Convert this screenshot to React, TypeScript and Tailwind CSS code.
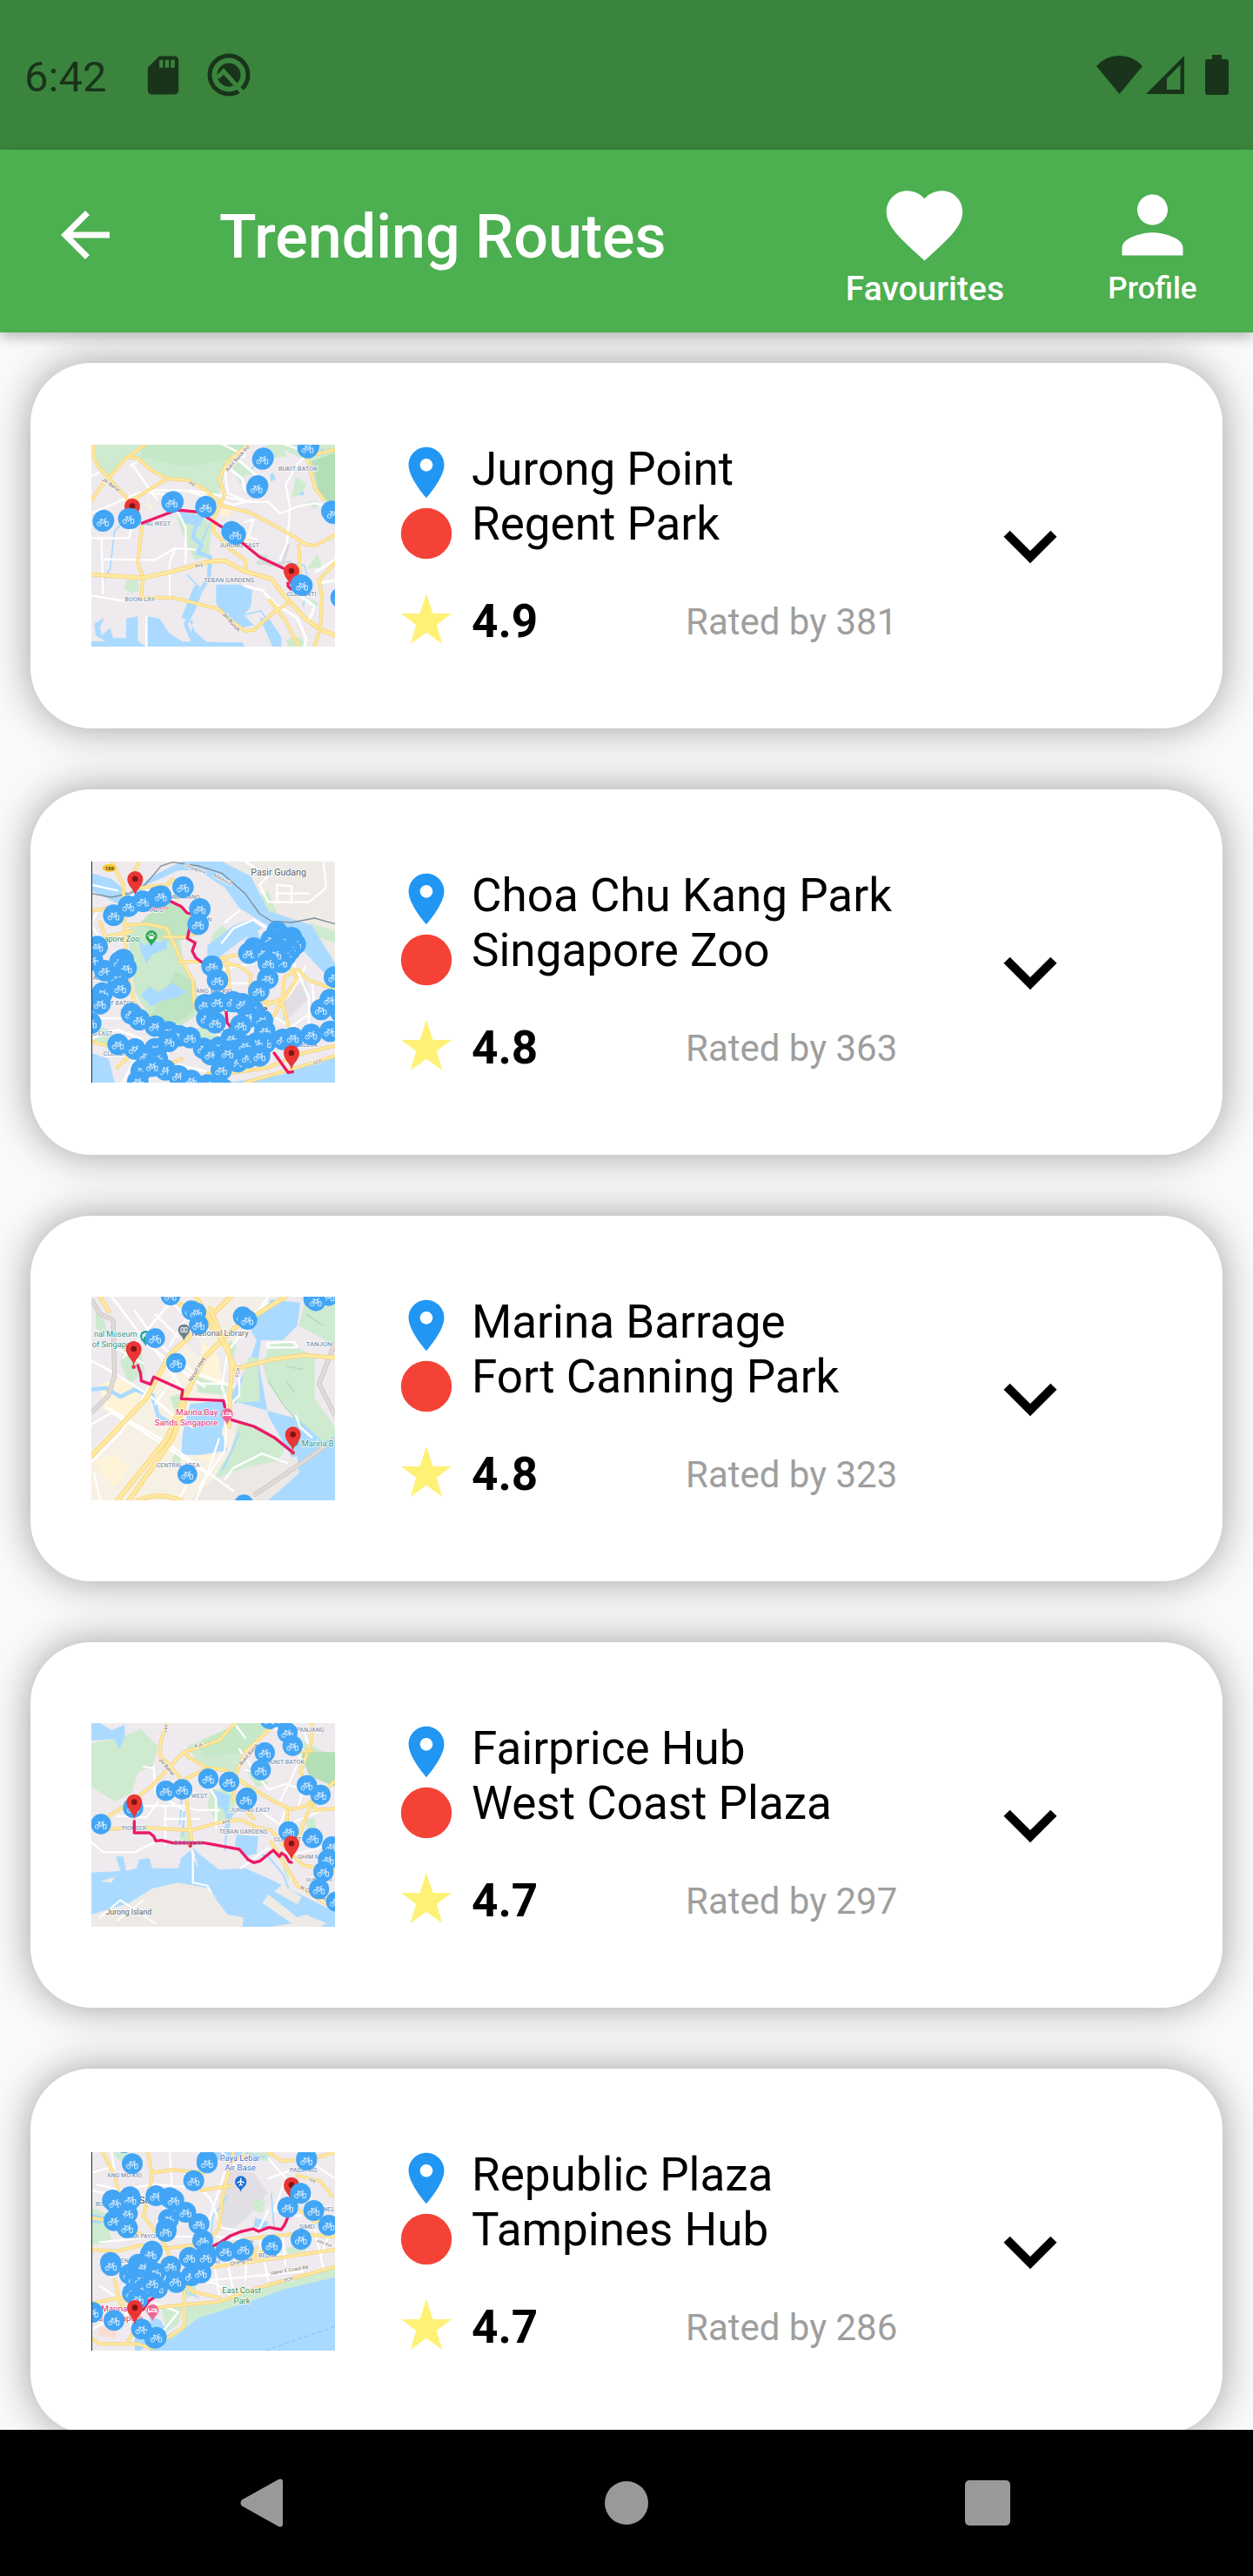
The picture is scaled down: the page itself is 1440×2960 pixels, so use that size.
import React from "react";

type Point = [number, number];

const LAND = "#eeeaee";
const WATER = "#aadaff";
const GREEN = "#ceebd0";

function Area({ d, fill = GREEN }: { d: string; fill?: string }) {
  return <path d={d} fill={fill} />;
}

function Street({ d, w = 7 }: { d: string; w?: number }) {
  return <path d={d} fill="none" stroke="#ffffff" strokeWidth={w} strokeLinejoin="round" strokeLinecap="round" />;
}

function Highway({ d, w = 12 }: { d: string; w?: number }) {
  return (
    <g fill="none" strokeLinejoin="round" strokeLinecap="round">
      <path d={d} stroke="#f7d47c" strokeWidth={w} />
      <path d={d} stroke="#ffe9a0" strokeWidth={w - 5} />
    </g>
  );
}

function Trail({ d }: { d: string }) {
  return <path d={d} fill="none" stroke="#ec1a66" strokeWidth={10} strokeLinejoin="round" strokeLinecap="round" />;
}

function Bikes({ at, r = 36 }: { at: Point[]; r?: number }) {
  return (
    <>
      {at.map(([x, y], i) => (
        <g key={i} transform={`translate(${x} ${y})`}>
          <circle r={r} fill="#42a5f5" />
          <g fill="none" stroke="#d9edfd" strokeWidth={3}>
            <circle cx={-13} cy={9} r={7} />
            <path d="M7 1h11v15H8zM-13 9l7-14h13l3 14M-6-5L0 9M0 9L7-5M-11-7h8M5-9h7" />
          </g>
        </g>
      ))}
    </>
  );
}

function Marker({ x, y }: { x: number; y: number }) {
  return (
    <g transform={`translate(${x} ${y})`}>
      <path d="M0 0C-3-22-27-34-27-58A27 27 0 1 1 27-58C27-34 3-22 0 0Z" fill="#e93534" />
      <circle cy={-58} r={10} fill="#80150f" />
    </g>
  );
}

function Label({
  x,
  y,
  size = 21,
  fill = "#8494b0",
  weight = 500,
  rotate = 0,
  anchor = "start",
  children,
}: {
  x: number;
  y: number;
  size?: number;
  fill?: string;
  weight?: number;
  rotate?: number;
  anchor?: "start" | "middle" | "end";
  children: string;
}) {
  return (
    <text
      x={x}
      y={y}
      fontSize={size}
      fill={fill}
      fontWeight={weight}
      textAnchor={anchor}
      transform={rotate ? `rotate(${rotate} ${x} ${y})` : undefined}
      stroke="#ffffff"
      strokeWidth={4}
      paintOrder="stroke"
      strokeLinejoin="round"
    >
      {children}
    </text>
  );
}

function JurongMap() {
  return (
    <svg viewBox="30 33 840 696" className="block w-full" role="img" aria-label="Map of Jurong Point to Regent Park">
      <rect x="30" y="33" width="840" height="696" fill={LAND} />
      <Area d="M45 33H560L490 130 465 215 410 180 340 150 280 145 195 80 150 75 90 150 40 90Z" />
      <Area d="M205 33H560L520 80 350 110 200 75Z" fill="#c5e8c8" />
      <Area d="M650 33H870V250L820 215 780 90Z" />
      <Area d="M790 90L870 60V250L815 200Z" fill="#b3dfb6" />
      <Area d="M500 90L545 80 570 110 600 130 560 140 545 170Z" />
      <Area d="M625 33h60l20 40-45 5zM735 145l35 20-10 40-40 10zM770 235l40-10-5 30zM810 410l15 45-50 5zM610 410l30 5-10 30-25 5zM150 500l40-5 5 40-25 10-28-15z" />
      <Area d="M325 285l60-25 60 50-10 110-50 10-30-60z" />
      <Area d="M700 705l50-10 20 34h-60zM780 560l35 20-20 30z" />
      <Area d="M215 640l60 20 45 50-100 15zM735 655l40 15-15 25z" fill="#efe8dc" />
      <Area d="M478 250l35 8-10 24-30-5zM220 215l25 45-18-5zM540 340l35 5-5 30-25-5z" fill="#fff3d2" />
      <Area d="M325 262L420 280 405 315 340 300ZM460 515L540 515 585 535 580 590 555 620 590 655 540 665 490 625 460 580Z" fill={WATER} />
      <path d="M395 300l-15 50 30 30-15 25 45 15-5 70-30 50-25 65-25 45 20 50" fill="none" stroke={WATER} strokeWidth="14" strokeLinejoin="round" />
      <path d="M640 45l-45 55-15 20M170 270l-60 60-15 130-30 45M555 620l60-15 30 50 25 74M360 480l40 45M710 440l55 10 15 60-20 80M440 300l-30 70" fill="none" stroke={WATER} strokeWidth="5" />
      <Area d="M30 710L80 712 45 690 40 650 75 630 60 660 65 690 95 665 105 700 150 700V632L190 625V710L220 729H30ZM220 625L265 632 300 685 345 712 550 715 560 729H220ZM380 640l-40-10 45-110 20 0-40 115 25 45 40 35h-60zM610 630l35 5 40 60v34h-30z" fill={WATER} />
      <Area d="M645 138l12-8 8 22-15 8zM750 195l12 0 0 12-12 0zM820 45l15 5-10 25z" fill={WATER} />
      <path d="M600 440l90 5 20-70M640 450l80-15" fill="none" stroke="#d5d9dc" strokeWidth="8" />
      <Street d="M165 105L185 95M170 100L255 220M30 355H160L185 240M65 355L70 545M75 428L250 430 318 390 390 395M230 200L300 205 355 320 355 440M30 270L190 200 250 190 350 190 520 240 580 225" />
      <Street d="M30 140L55 130M318 390L300 440 300 565M30 553L130 570 160 568M220 625V729M370 190L480 210 570 230 640 230 680 270 745 245 800 235 850 245M560 300L590 290 570 350 600 360M485 33L560 70 490 120 500 200 570 230M700 33L780 60 740 100 700 170 715 250 705 370 680 430" />
      <Street d="M560 520L620 535 660 580 740 630 770 700 765 729M730 540L800 590 780 640M820 510L870 500M805 470L870 430M500 110L550 150 560 190M520 70L600 140" w={9} />
      <Highway d="M38 33Q30 80 60 115L150 215 170 240M30 228L60 180 150 80 215 33M165 78H188L235 120 290 150 360 155 425 190 485 245 570 265 640 300 730 350 765 375 800 382 870 345" />
      <Highway d="M290 150L170 225M170 270L205 310 190 440 208 490 202 560M570 35L500 90 470 150 490 205 450 290 450 330 510 395 560 430 565 470" />
      <Highway d="M30 480L205 492 290 475 440 435 490 433 560 470 650 495 700 560 770 635 820 670 870 690" w={15} />
      <Highway d="M205 560H310L470 600 500 630 560 675 590 672 660 610 715 575M645 570L700 640 745 729M870 440L815 500 825 560 820 660 800 729M775 80L800 180 830 220M745 380L750 470 730 500M870 50L810 65" />
      <Label x={160} y={311}>JURONG WEST</Label>
      <Label x={470} y={387}>JURONG EAST</Label>
      <Label x={417} y={508} size={22}>TEBAN GARDENS</Label>
      <Label x={145} y={574} size={22}>BOON LAY</Label>
      <Label x={674} y={124} size={22}>BUKIT BATOK</Label>
      <Label x={704} y={555}>CLEMENTI</Label>
      <Label x={65} y={155} size={17} fill="#8d7e74" rotate={35}>Jln Bahar</Label>
      <Label x={500} y={126} size={17} fill="#8d7e74" rotate={-48}>Bukit Batok Rd</Label>
      <Label x={480} y={618} size={19} fill="#8d7e74" rotate={48}>Jln Buroh</Label>
      <Label x={365} y={168} size={15} fill="#8d7e74" rotate={30}>PIE</Label>
      <Label x={388} y={457} size={16} fill="#8d7e74" rotate={-8}>AYE</Label>
      <Trail d="M205 303L325 258 400 265 500 330 610 420 700 463M708 510V520L718 531" />
      <Marker x={171} y={303} />
      <Marker x={720} y={526} />
      <Bikes at={[[73, 293], [70, 297], [166, 287], [158, 288], [312, 229], [307, 232], [425, 245], [424, 248], [514, 332], [527, 342], [623, 79], [620, 83], [604, 174], [600, 182], [780, 38], [776, 44], [858, 262], [864, 270], [752, 516], [757, 518], [890, 560]]} />
    </svg>
  );
}

function ZooMap() {
  return (
    <svg viewBox="30 30 840 762" className="block w-full" role="img" aria-label="Map of Choa Chu Kang Park to Singapore Zoo">
      <rect x="30" y="30" width="840" height="762" fill={LAND} />
      <Area d="M480 30H870V400L790 290 640 210 560 120Z" fill="#eeebe6" />
      <Area d="M160 240L330 260 350 400 400 470 390 560 320 610 230 560 180 480 160 350Z" fill="#cbe9cc" />
      <Area d="M200 240l80-80 110 60-40 80-70 10zM320 410l70 30-10 110-60 40-90-20z" fill="#bfe4c1" />
      <Area d="M780 240l90 30v40l-60-20zM450 280l30-30 45 30-40 40-50 10zM380 610l70-20 20 50-50 10zM30 590l60 20 10 60-60-10zM580 180l60-50 30 80-60 10z" />
      <Area d="M30 70L100 90 160 140 240 80 340 30H480L580 80 640 200 790 250 870 380V450L800 380 720 290 620 240 540 190 490 120 400 60 330 60 220 110 150 190 30 130Z" fill={WATER} />
      <Area d="M430 320l90-70 60-20 40 30-70 40-80 60-40 10zM560 300l40-40 20 60z" fill={WATER} />
      <Area d="M190 290l20 30 30-20 30 10 20-20 0 40-50 20-20 30-15-30zM200 490l30-30 30 20 50-30 50 30-40 20-50 10-30 20z" fill={WATER} />
      <Area d="M870 705L740 735 690 765 500 792H870ZM30 690l60 20 20 82H30z" fill={WATER} />
      <Area d="M700 480l70-40 10 60-60 60-30 20z" fill="#e1dfe3" />
      <path d="M30 140L100 153 160 140 215 110 270 45 310 32 400 45 480 70 560 140 610 210 650 235 720 240 800 225 870 245" fill="none" stroke="#848c95" strokeWidth="4" />
      <Street d="M560 30L640 80 610 110 640 170H780L840 120 830 30M670 170V110L720 115V170M670 140H780M30 110L120 130M50 200L30 250 70 310M160 150L250 120M480 310L520 260 590 230 650 270M440 410L590 380M500 450H580M770 390L720 480 650 560 720 600 800 540 790 440M540 200L490 240" />
      <Street d="M30 640L120 610 200 640M60 570H180M100 410L180 390M260 760L300 680M640 620L770 640M720 360L780 500 780 650M200 660L140 792M330 730L450 760" w={8} />
      <Highway d="M100 30L140 110 145 250 155 420 180 520 215 555 330 610 430 680 520 690 700 640M195 30L170 80 200 120 290 110 310 90 330 160M30 200L90 190 150 250 220 245 290 260 340 370 380 440 385 530 450 600M280 290H360L410 270" />
      <Highway d="M335 375H430L560 345M430 370L540 390 580 420 575 490 520 510M560 560L690 500 695 430 740 400 780 440 870 470M600 510L690 520 710 600M495 360L510 500M700 380L740 430 640 590 600 620" />
      <Highway d="M60 240L80 290 170 270M30 650L140 680 160 700 120 740M160 560L250 620 360 630M430 760H510L640 740 760 690 870 665M560 792L740 740 870 700M230 760L340 710" />
      <ellipse cx={92} cy={52} rx={24} ry={13} fill="#f8c927" />
      <text x={92} y={59} fontSize={18} textAnchor="middle" fill="#4b4433" fontWeight={700}>188</text>
      <Label x={580} y={78} size={32} fill="#5b6470" weight={400}>Pasir Gudang</Label>
      <Label x={350} y={47} size={17} fill="#8b97a5" rotate={20}>Singapore</Label>
      <Label x={450} y={81} size={17} fill="#8b97a5" rotate={27}>Malaysia</Label>
      <Label x={74} y={307} size={27} fill="#2d8a50" weight={400}>apore Zoo</Label>
      <Label x={299} y={159}>MBAWANG</Label>
      <Label x={222} y={205}>ANDS</Label>
      <Label x={430} y={236}>N</Label>
      <Label x={390} y={484} size={22}>ANG MO KIO</Label>
      <Label x={95} y={524}>T BATOK</Label>
      <Label x={35} y={630} size={20}>G EAST</Label>
      <Label x={71} y={698}>CLEMENTI</Label>
      <Label x={436} y={625}>TOA PAYOH</Label>
      <Label x={747} y={669} size={20}>BEDOK</Label>
      <Label x={35} y={437} size={20}>AN</Label>
      <Label x={797} y={730} size={16} fill="#8d7e74" rotate={-15}>ECP</Label>
      <Label x={485} y={549} size={34} fill="#3d4247" weight={400}>Singapore</Label>
      <path d="M237 323C234 307 217 302 217 287a20 20 0 1 1 40 0C257 302 240 307 237 323Z" fill="#31a853" />
      <g fill="#fff">
        <ellipse cx={237} cy={292} rx={8} ry={6} />
        <circle cx={227} cy={286} r={3} />
        <circle cx={233} cy={279} r={3} />
        <circle cx={241} cy={279} r={3} />
        <circle cx={247} cy={286} r={3} />
      </g>
      <path d="M205 190H295" stroke="#f4a6bd" strokeWidth={7} />
      <Trail d="M305 168L340 185 360 207 372 210M368 262L361 295 388 310 378 338 390 362 412 378M495 550L498 585 510 600M550 635L565 640M660 690L708 757 724 755" />
      <Marker x={181} y={148} />
      <Bikes
        r={37}
        at={[
          [107, 215], [158, 184], [208, 167], [258, 152], [270, 149], [346, 118], [404, 193], [398, 246], [446, 390], [465, 439],
          [50, 323], [34, 370], [140, 368], [128, 376], [76, 406], [150, 397], [120, 435], [130, 466], [68, 483], [60, 520], [28, 587],
          [590, 328], [573, 346], [670, 272], [650, 300], [690, 290], [720, 292], [705, 305], [733, 315], [715, 335], [665, 330], [700, 355], [625, 345], [685, 377], [665, 350], [640, 380], [638, 433], [607, 476],
          [168, 554], [195, 575], [250, 597], [296, 617], [334, 631], [296, 650], [370, 637], [122, 660], [180, 676], [417, 674], [250, 675], [218, 700], [257, 708], [202, 750], [285, 748], [330, 768], [375, 785], [190, 788], [430, 800], [240, 735],
          [422, 523], [465, 514], [428, 570], [457, 585], [518, 513], [550, 520], [588, 543], [572, 566], [545, 594], [620, 577], [628, 613], [512, 640], [630, 655], [470, 670], [520, 682], [600, 655], [560, 665], [442, 695], [535, 720], [570, 706], [610, 700], [485, 720], [478, 748], [500, 690],
          [690, 643], [725, 637], [788, 626], [853, 615], [822, 540], [853, 506], [868, 428], [890, 550], [485, 815],
        ]}
      />
      <Marker x={720} y={748} />
      <path d="M31 30V792" stroke="#262b30" strokeWidth={4} />
    </svg>
  );
}

function MarinaMap() {
  return (
    <svg viewBox="30 30 840 702" className="block w-full" role="img" aria-label="Map of Marina Barrage to Fort Canning Park">
      <rect x="30" y="30" width="840" height="702" fill={LAND} />
      <Area d="M350 190L480 300 470 390 540 540 430 732H30V560L200 380Z" fill="#f7f0e4" />
      <Area d="M320 30H520L640 30 560 170 450 230 370 150Z" fill="#f3eee8" />
      <Area d="M410 180l60 60 10 90-80-10zM60 330l80-20 60 60-50 80-80-30zM40 600l70-30 50 50-50 70zM470 430l25 60-60 110-40-20z" fill="#fff3d8" />
      <Area d="M650 40L750 50 740 130 690 180 615 180 605 250 640 440 730 600 750 640 730 700 870 732V480L700 440 540 395 500 400 480 500 500 560 410 575 340 575 345 500 370 400 500 385 570 270 600 180 570 130Z" fill={WATER} />
      <Area d="M740 640L870 490V732H620Z" fill={WATER} />
      <Area d="M645 200L700 180 800 240 800 380 870 480V510L830 530 730 440 640 330 620 260Z" />
      <Area d="M745 130L770 30H870V200L820 170Z" />
      <Area d="M540 460L620 480 700 550 670 600 560 620 480 680 450 660 510 560Z" />
      <Area d="M560 620L740 580 745 640 640 732H370L450 660Z" fill="#ece8e5" />
      <Area d="M140 200L200 210 215 290 160 330 130 260ZM380 300L500 340 495 370 400 360ZM300 375l50-15 10 40-40 30zM570 240l35 0 5 150-80 5zM320 560l20 10-5 50-30-15zM45 80l30 30 10 50-40-20zM510 180l20 20-10 40-30-30z" />
      <path d="M640 320l50 80 70 80M770 90l60 40M700 320l30 40M700 270l60 10" fill="none" stroke="#b3ddba" strokeWidth="5" />
      <path d="M30 350L80 345 130 375 180 350 240 370 260 440 310 470" fill="none" stroke={WATER} strokeWidth="14" strokeLinejoin="round" />
      <path d="M540 500l-35 80-25 50" fill="none" stroke={WATER} strokeWidth="7" />
      <Street d="M30 250L120 300 230 370 300 430 380 480M80 410L270 520 520 700M30 470L100 430 200 490 430 640M180 80L260 190 380 290 520 340M30 600L130 500 250 310M210 260L120 210M100 30L230 200 310 260 420 340M320 30L140 240" w={8} />
      <Street d="M640 30L500 220 480 340 500 400 490 560 400 690M470 520L430 640 390 732M540 170L600 80 640 50M500 330H400L350 290M300 40L420 170M400 30L300 200M240 200L360 370M620 570L520 620 490 660M620 572L705 603M735 440L750 480 790 515M635 190L730 185 740 205 640 205ZM40 640L60 732M540 310V370L510 400M250 90L330 170M300 250L200 400M250 400L320 300M400 600L330 732" />
      <path d="M30 40L60 90 105 110 110 300 90 370 30 430M870 520L760 600 590 715M870 190L815 330 870 440" fill="none" stroke="#cfc9c6" strokeWidth="16" strokeLinejoin="round" />
      <path d="M30 40L60 90 105 110 110 300 90 370 30 430M870 520L760 600 590 715M870 190L815 330 870 440" fill="none" stroke="#e0dbd8" strokeWidth="10" strokeLinejoin="round" />
      <Highway d="M30 580L220 380 300 230 420 120 510 30" w={17} />
      <Highway d="M120 732L290 520 340 400 420 240 520 140 700 30M160 732L310 520 350 400" w={17} />
      <Highway d="M300 30L430 120 500 200 515 270 510 330 505 480M390 30L460 140 530 280M520 295L540 275 660 245 760 232 870 240M440 70L480 170M190 732Q260 700 340 732M60 30L90 80" w={15} />
      <Label x={187} y={169} size={27} fill="#22948b" weight={400} anchor="end">nal Museum</Label>
      <Label x={32} y={205} size={28} fill="#22948b" weight={400}>of Singapore</Label>
      <Label x={376} y={166} size={28} fill="#5a7080" weight={400}>National Library</Label>
      <Label x={770} y={200} size={23}>TANJON</Label>
      <Label x={466} y={438} size={29} fill="#e42a6a" weight={400} anchor="end">Marina Bay</Label>
      <Label x={466} y={474} size={29} fill="#e42a6a" weight={400} anchor="end">Sands Singapore</Label>
      <Label x={755} y={545} size={28} fill="#22948b" weight={400}>Marina B</Label>
      <Label x={254} y={617}>CENTRAL AREA</Label>
      <Label x={376} y={325} size={20} fill="#8d7e74" rotate={-60}>Nicoll Hwy</Label>
      <Label x={536} y={308} size={17} fill="#8d7e74" rotate={-75}>ECP</Label>
      <path d="M217 202C214 187 198 183 198 166a19 19 0 1 1 38 0C236 183 220 187 217 202Z" fill="#2aa79b" />
      <path d="M208 175v-10h18v10M206 163l11-6 11 6" fill="none" stroke="#fff" strokeWidth={4} />
      <path d="M349 182C346 165 329 160 329 145a20 20 0 1 1 40 0C369 160 352 165 349 182Z" fill="#6c808d" />
      <path d="M339 137h9v15h-9zM351 137h9v15h-9z" fill="none" stroke="#fff" strokeWidth={3} />
      <circle cx={727} cy={530} r={17} fill="#2aa79b" />
      <Trail d="M190 267L200 295 202 320 234 332 245 307 345 352 340 382 485 388 490 410M515 455L590 477 660 515 705 551 725 567" />
      <path d="M498 473C495 456 478 451 478 435a20 20 0 1 1 40 0C518 451 501 456 498 473Z" fill="#f06595" />
      <path d="M484 427v16M484 439h28v4M492 431h18v8" fill="none" stroke="#fff" strokeWidth={4} />
      <circle cx={176} cy={272} r={7} fill="#e93549" />
      <circle cx={725} cy={568} r={7} fill="#e93549" />
      <Marker x={176} y={268} />
      <Marker x={725} y={563} />
      <Bikes r={34} at={[[303, 26], [375, 77], [392, 84], [400, 127], [552, 98], [568, 110], [250, 173], [322, 258], [361, 642], [795, 38], [848, 28], [804, 46], [556, 746]]} />
    </svg>
  );
}

function FairpriceMap() {
  return (
    <svg viewBox="30 30 840 702" className="block w-full" role="img" aria-label="Map of Fairprice Hub to West Coast Plaza">
      <rect x="30" y="30" width="840" height="702" fill={LAND} />
      <Area d="M30 100L130 80 200 50 260 110 240 180 190 200 170 270 110 300 30 250ZM360 110L540 30H640L560 140 530 210 410 180ZM700 60L870 150V250L790 200Z" />
      <Area d="M750 130L870 130V250L780 210Z" fill="#b3dfb6" />
      <Area d="M395 100L540 30H650L560 130 420 150Z" fill="#c5e8c8" />
      <Area d="M440 260l70-10 20 90-60 40-40-60zM335 405l45 0-5 35-40-10zM560 190l50-10 30 60-40 10zM770 365l30-10 5 45-30-5zM690 520l30 20 5 40-25-20z" />
      <Area d="M30 30H60L100 55 145 35V80L125 120 110 85 30 90Z" fill={WATER} />
      <Area d="M30 545L130 540 115 490 140 490 150 540 185 530 195 500 230 495 240 530 330 530 340 495 370 470 395 525 430 530 400 480 470 535 560 530 650 570 870 680V732H30Z" fill={WATER} />
      <Area d="M30 690L160 650 240 600 330 580 440 600 465 645 500 690 555 700 550 732H30Z" fill="#eeebe6" />
      <Area d="M640 620L740 700 770 690 840 720 820 732H650L720 720 620 650ZM690 585L755 630 740 655 660 610ZM60 575l50-15-10 20z" fill="#eeebe6" />
      <Area d="M450 260l60 20-10 60-40-30zM530 415L605 420 600 480 560 490 525 450ZM380 460l60 60 30 20-70-10zM500 340l20 0-20 70-15 0z" fill={WATER} />
      <path d="M350 330l-5 90M480 300l20 60-10 110M610 480l30 10 50 60 20 50M345 230l-10 150" fill="none" stroke={WATER} strokeWidth="6" />
      <Street d="M245 180L250 270 350 330M200 315H345L390 330 470 330M285 320V450M120 350L220 355 260 300M30 440L70 475 180 475 250 440M280 360H400M430 240L460 290 460 390M380 475V580M545 530L640 460 690 500 720 570M540 120L640 260 700 240 760 260 740 330M610 330L680 380 700 330M560 80L530 40" />
      <Street d="M640 30L760 120 720 220 680 300M210 180L245 185M380 580L430 590 440 610M120 710L210 640M60 700L130 640 250 720M730 370L830 330M560 190L620 210M740 480L850 450M760 50L780 110" w={6} />
      <Highway d="M290 30L270 90 265 140 330 210 345 240M30 380L90 350 170 300 240 245 310 170 350 130 470 90 525 30M350 130L370 150 430 185 490 190 560 240 660 300 720 328 770 315 870 230M790 30L790 90 750 200 790 260 800 330 870 325" />
      <Highway d="M90 395L220 390 370 400 480 370 545 362 600 390 650 400 700 460 760 520 870 540M430 185L350 225M355 260L370 390 375 430M650 45L560 130 530 200 520 290 590 360M705 330V380M650 440L700 520 740 590 820 640 870 670M800 280L760 380 720 480M730 130L790 125" />
      <Label x={134} y={398}>PIONEER</Label>
      <Label x={355} y={289}>G WEST</Label>
      <Label x={508} y={336}>JURONG EAST</Label>
      <Label x={470} y={411}>TEBAN GARDENS</Label>
      <Label x={659} y={438}>CLEMENTI</Label>
      <Label x={635} y={172}>BUKIT BATOK</Label>
      <Label x={737} y={59}>PANJANG</Label>
      <Label x={742} y={499}>GHIM MOH</Label>
      <Label x={770} y={575} size={18}>QUEENSTO</Label>
      <Label x={80} y={690} size={26} fill="#555c5b" weight={400}>Jurong Island</Label>
      <Label x={260} y={157} size={18} fill="#8d7e74" rotate={48}>Jln Bahar</Label>
      <Label x={290} y={60} size={15} fill="#8d7e74" rotate={-85}>Lim</Label>
      <Label x={548} y={176} size={18} fill="#8d7e74" rotate={-50}>Bukit Batok</Label>
      <Label x={388} y={115} size={16} fill="#8d7e74" rotate={-15}>KJE</Label>
      <Label x={482} y={378} size={16} fill="#8d7e74" rotate={-10}>AYE</Label>
      <Label x={747} y={600} size={18} fill="#8d7e74" rotate={25}>W Coast Hwy</Label>
      <Bikes at={[[63, 378], [174, 322], [287, 263], [343, 258], [433, 221], [505, 232], [566, 287], [563, 293], [614, 192], [628, 131], [645, 16], [690, 14], [706, 63], [724, 108], [773, 244], [820, 277], [710, 403], [793, 426], [860, 455], [846, 500], [830, 542], [815, 602], [874, 645]]} r={35} />
      <Trail d="M178 368V408H230L245 420 252 436 272 434 310 443H420L540 465 570 500 590 511 612 505 657 468 678 490 686 478 700 488 712 508 720 510" />
      <circle cx={371} cy={452} r={7} fill="#e93549" />
      <text x={315} y={450} fontSize={21} fontWeight={500} fill="#9c7ba0">BOON LAY</text>
      <Marker x={178} y={360} />
      <Marker x={720} y={503} />
    </svg>
  );
}

function RepublicMap() {
  return (
    <svg viewBox="30 39 840 684" className="block w-full" role="img" aria-label="Map of Republic Plaza to Tampines Hub">
      <rect x="30" y="39" width="840" height="684" fill={LAND} />
      <Area d="M500 100L590 110 640 180 560 270 520 300 460 310 480 200Z" fill="#e1dfe3" />
      <Area d="M30 230L80 250 100 350 30 360ZM590 200l40 10-10 40-30-10zM560 40l80 0 10 30-60-5zM100 40l60 0-30 30zM700 370l60-10 10 20-60 10zM350 510l40-10 0 30-30 10zM270 570l80-10-20 70-40 30z" />
      <Area d="M30 250l60 15-30 20-30-5zM595 265l45 15-10 25-40-10zM400 39h150v20l-70 10z" fill={WATER} />
      <Area d="M870 460L700 500 560 550 420 590 340 640 230 710V723H870ZM180 670L240 640 300 640 200 723H180ZM230 600l40 20 20 40-50-10z" fill={WATER} />
      <Area d="M870 440L690 480 560 530 360 570 350 630 300 690 400 610 560 560 700 510 870 470Z" />
      <Area d="M60 640l60 10-10 30-60-10z" fill="#fbdcd0" />
      <path d="M870 640L630 723" stroke="#8fbfe8" strokeWidth={3} strokeDasharray="14 10" />
      <path d="M500 190l-50 70-10 90M650 180l10 120M300 500l100 40M560 40l80 20" fill="none" stroke={WATER} strokeWidth={5} />
      <Street d="M50 150L130 170 240 150 370 160M100 39L110 110M300 39L310 190M340 100L440 200 480 300 540 310M500 80L430 290M460 330L560 340M440 480L760 450M450 400L470 530M570 350L560 480M610 340L640 480M690 330L700 430M640 60L700 130 660 240 750 260 790 200M740 39L870 130M790 260L830 440" />
      <Street d="M30 170L120 190M30 110L100 90M60 350L240 330 410 330M100 400L160 520M60 500L130 550 170 640M250 560L330 590 250 690M340 480L460 490 520 540M640 240L600 320M560 380L740 400M850 320L820 400M500 420L520 520M130 600L30 650M480 39L530 90M640 130L720 100" w={7} />
      <Highway d="M70 39L110 120 140 230M225 39L240 120 230 170 210 260 280 350 330 470 380 520 470 540M240 110L310 100 420 110M410 170L510 155M520 39L480 200 470 300 440 340M30 265L110 280 220 330" />
      <Highway d="M30 375L120 380 200 360 290 370 380 360 480 370 560 340 640 330 740 320 870 330M740 120L820 140 860 190M640 39L690 70 800 60 870 39M450 435L560 420 700 400 870 375M580 420L600 370M660 400L680 370" />
      <Highway d="M30 560L130 540 200 580 350 565 470 555 560 520 700 480 870 435M350 520V640L240 715 190 700H60L30 680M110 480L130 560 200 620 150 700M600 400L640 360M750 240L800 280 850 260M540 60L570 50" />
      <Label x={542} y={69} size={28} fill="#3b70cf" weight={400} anchor="middle">Paya Lebar</Label>
      <Label x={543} y={103} size={29} fill="#3b70cf" weight={400} anchor="middle">Air Base</Label>
      <Label x={548} y={525} size={28} fill="#2b9050" weight={400} anchor="middle">East Coast</Label>
      <Label x={549} y={560} size={28} fill="#2b9050" weight={400} anchor="middle">Park</Label>
      <Label x={84} y={127}>ANG MO KIO</Label>
      <Label x={44} y={226} size={20}>BISHAN</Label>
      <Label x={194} y={215} size={34} fill="#3d4247" weight={400}>Singapore</Label>
      <Label x={165} y={337}>OA PAYOH</Label>
      <Label x={118} y={419}>VENA</Label>
      <Label x={714} y={108}>PASIR RIS</Label>
      <Label x={746} y={303}>SIMEI</Label>
      <Label x={606} y={403}>BEDOK</Label>
      <Label x={830} y={244} size={19}>NES</Label>
      <Label x={450} y={424} size={18}>NG</Label>
      <Label x={510} y={430} size={17} fill="#8d7e74" rotate={-13}>Changi Rd</Label>
      <Label x={648} y={461} size={17} fill="#8d7e74" rotate={-9}>Upper E Coast Rd</Label>
      <Label x={806} y={348} size={14} fill="#8d7e74" rotate={20}>Xilin Ave</Label>
      <Label x={697} y={486} size={16} fill="#8d7e74" rotate={-12}>ECP</Label>
      <Label x={776} y={138} size={15} fill="#8d7e74" rotate={18}>TPE</Label>
      <Label x={570} y={355} size={15} fill="#8d7e74" rotate={-15}>PIE</Label>
      <Label x={64} y={588} size={29} fill="#e42a6a" weight={400}>Marina Bay</Label>
      <Label x={208} y={622} size={29} fill="#e42a6a" weight={400} anchor="end">ds Singapore</Label>
      <path d="M545 176C542 162 525 157 525 141a20 20 0 1 1 40 0C565 157 548 162 545 176Z" fill="#1a73d8" />
      <path d="M545 128v25M533 145l12-7 12 7M539 154l6-4 6 4" fill="none" stroke="#fff" strokeWidth={4} />
      <path d="M241 622C238 605 220 600 220 585a21 21 0 1 1 42 0C262 600 244 605 241 622Z" fill="#f06595" />
      <path d="M227 576v17M227 588h28v5M236 580h18v8" fill="none" stroke="#fff" strokeWidth={4} />
      <Trail d="M450 362L475 350 510 327 545 313 588 303 606 312 643 298 684 306 696 290 708 262M208 582L228 552 250 537" />
      <Marker x={720} y={210} />
      <Bikes
        r={36}
        at={[
          [143, 6], [171, 79], [429, 68], [429, 76], [383, 137], [772, 60], [772, 66], [751, 181], [707, 229], [797, 240], [848, 291], [753, 339], [652, 359],
          [103, 204], [112, 213], [163, 193], [165, 202], [253, 189], [300, 196], [314, 204], [355, 246], [296, 270], [288, 304], [287, 312], [154, 250], [108, 275], [154, 300], [401, 286], [414, 343],
          [240, 380], [234, 390], [96, 419], [98, 430], [368, 402], [425, 390], [425, 402], [493, 380], [547, 377], [554, 373], [192, 425], [208, 435], [303, 432], [162, 460], [250, 455], [180, 475], [323, 488], [320, 483], [375, 465], [408, 455], [200, 480],
          [172, 525], [215, 507], [190, 545], [258, 508], [240, 490], [34, 591], [108, 619], [203, 649], [248, 680], [254, 677],
        ]}
      />
      <Marker x={180} y={633} />
      <path d="M31 39V723" stroke="#262b30" strokeWidth={4} />
    </svg>
  );
}

interface Route {
  from: string;
  to: string;
  rating: string;
  votes: number;
  Map: () => React.ReactElement;
}

const routes: Route[] = [
  { from: "Jurong Point", to: "Regent Park", rating: "4.9", votes: 381, Map: JurongMap },
  { from: "Choa Chu Kang Park", to: "Singapore Zoo", rating: "4.8", votes: 363, Map: ZooMap },
  { from: "Marina Barrage", to: "Fort Canning Park", rating: "4.8", votes: 323, Map: MarinaMap },
  { from: "Fairprice Hub", to: "West Coast Plaza", rating: "4.7", votes: 297, Map: FairpriceMap },
  { from: "Republic Plaza", to: "Tampines Hub", rating: "4.7", votes: 286, Map: RepublicMap },
];

function StatusBar() {
  return (
    <div className="flex h-[172px] shrink-0 items-center bg-[#3b843d] px-7 text-[#19341a]">
      <span className="w-[133px] pt-1 text-[49px] leading-none">6:42</span>
      <svg viewBox="0 0 24 24" className="size-[53px]" fill="currentColor" aria-hidden="true">
        <path d="M18 2h-8L4 8v12c0 1.100.9 2 2 2h12c1.100 0 2-.9 2-2V4c0-1.100-.9-2-2-2zm-6 6h-2V4h2v4zm3 0h-2V4h2v4zm3 0h-2V4h2v4z" />
      </svg>
      <svg viewBox="-25 -25 50 50" className="ml-6 size-[50px]" fill="none" aria-hidden="true">
        <circle r="22" stroke="currentColor" strokeWidth="5" />
        <circle r="13.500" fill="currentColor" />
        <path d="M-13 3L-6-4L19 24" stroke="#3b843d" strokeWidth="5" />
      </svg>
      <div className="ml-auto flex items-center">
        <svg viewBox="0 0 53 44" className="h-[44px] w-[53px]" fill="currentColor" aria-hidden="true">
          <path d="M26.500 44L0 12Q11 0 26.500 0T53 12Z" />
        </svg>
        <svg viewBox="0 0 44 44" className="ml-1 size-[44px]" fill="currentColor" fillRule="evenodd" aria-hidden="true">
          <path d="M0 44L44 0V44ZM24 26V39H39.500V10.500Z" />
        </svg>
        <svg viewBox="0 0 27 46" className="ml-6 h-[46px] w-[27px]" fill="currentColor" aria-hidden="true">
          <path d="M8 0H19V5H24Q27 5 27 8V43Q27 46 24 46H3Q0 46 0 43V8Q0 5 3 5H8Z" />
        </svg>
      </div>
    </div>
  );
}

function AppBar() {
  return (
    <header className="relative z-10 flex h-[210px] shrink-0 items-start bg-[#4caf50] text-white shadow-[0_6px_14px_rgba(0,0,0,0.25)]">
      <div className="flex h-[196px] flex-1 items-center pl-14">
        <button type="button" aria-label="Back">
          <svg viewBox="0 0 24 24" className="size-[84px]" fill="currentColor">
            <path d="M20 11H7.830l5.590-5.590L12 4l-8 8 8 8 1.410-1.410L7.830 13H20v-2z" />
          </svg>
        </button>
        <h1 className="ml-28 pt-1 text-[70px] font-medium leading-none">Trending Routes</h1>
      </div>
      <nav className="flex pr-[63px] pt-[34px] font-medium">
        <a href="#favourites" className="flex flex-col items-center">
          <svg viewBox="0 0 24 24" className="size-[105px]" fill="currentColor" aria-hidden="true">
            <path d="M12 21.350l-1.450-1.320C5.400 15.360 2 12.280 2 8.500 2 5.420 4.420 3 7.500 3c1.740 0 3.410.81 4.500 2.090C13.090 3.810 14.760 3 16.500 3 19.580 3 22 5.420 22 8.500c0 3.780-3.400 6.860-8.550 11.540L12 21.350z" />
          </svg>
          <span className="text-[39px] leading-[42px]">Favourites</span>
        </a>
        <a href="#profile" className="ml-[118px] flex flex-col items-center">
          <svg viewBox="0 0 24 24" className="size-[105px]" fill="currentColor" aria-hidden="true">
            <path d="M12 12c2.210 0 4-1.790 4-4s-1.790-4-4-4-4 1.790-4 4 1.790 4 4 4zm0 2c-2.670 0-8 1.340-8 4v2h16v-2c0-2.660-5.330-4-8-4z" />
          </svg>
          <span className="text-[35px] leading-[42px]">Profile</span>
        </a>
      </nav>
    </header>
  );
}

function RouteCard({ from, to, rating, votes, Map }: Route) {
  return (
    <li className="flex h-[420px] shrink-0 items-center rounded-[70px] bg-white px-[70px] shadow-[0_0_46px_#9e9e9e]">
      <div className="w-[280px] shrink-0">
        <Map />
      </div>
      <div className="ml-[70px] min-w-0 flex-1">
        <div className="flex">
          <div className="w-[70px]">
            <svg viewBox="0 0 24 24" className="size-[70px]" fill="#2196f3" aria-hidden="true">
              <path d="M12 2C8.130 2 5 5.130 5 9c0 5.250 7 13 7 13s7-7.750 7-13c0-3.870-3.130-7-7-7zm0 9.500c-1.380 0-2.500-1.120-2.500-2.500s1.120-2.500 2.500-2.500 2.500 1.120 2.500 2.500-1.120 2.500-2.500 2.500z" />
            </svg>
            <svg viewBox="0 0 24 24" className="size-[70px]" fill="#f44336" aria-hidden="true">
              <circle cx="12" cy="12" r="10" />
            </svg>
          </div>
          <h2 className="ml-[17px] whitespace-nowrap text-[53px] leading-[63px]">
            {from}
            <br />
            {to}
          </h2>
        </div>
        <div className="mt-7 flex h-[70px] items-center">
          <svg viewBox="0 0 70 70" className="size-[70px]" fill="#fff176" aria-hidden="true">
            <path d="M35 6L42.500 29H64L46.800 42 53.300 64 35 50.700 16.700 64 23.200 42 6 29H27.500Z" />
          </svg>
          <div className="ml-[17px] flex items-center whitespace-nowrap pt-[6px]">
            <span className="w-[246px] text-[53px] font-bold leading-[63px]">{rating}</span>
            <span className="text-[42px] leading-[63px] text-[#9e9e9e]">Rated by {votes}</span>
          </div>
        </div>
      </div>
      <button type="button" aria-label={`Show details for ${from} to ${to}`} className="mr-[90px] shrink-0">
        <svg viewBox="0 0 24 24" className="size-[122px]">
          <path d="M16.590 8.590L12 13.170 7.410 8.590 6 10l6 6 6-6z" />
        </svg>
      </button>
    </li>
  );
}

function NavigationBar() {
  return (
    <nav className="relative z-10 flex h-[168px] shrink-0 items-center justify-center gap-[135px] bg-black" aria-label="System">
      <button type="button" aria-label="System back" className="flex w-[280px] justify-center">
        <svg viewBox="0 0 84 84" className="size-[84px]" fill="#999999">
          <path d="M15 38.500Q12 42 15 45.500L57 69Q62 71 62 66V18Q62 13 57 15Z" />
        </svg>
      </button>
      <button type="button" aria-label="Home" className="flex w-[280px] justify-center">
        <span className="size-[50px] rounded-full bg-[#999999]" />
      </button>
      <button type="button" aria-label="Recent apps" className="flex w-[280px] justify-center">
        <span className="size-[52px] rounded-[5px] bg-[#999999]" />
      </button>
    </nav>
  );
}

export default function App() {
  return (
    <div className="flex h-screen flex-col overflow-hidden bg-[#fafafa] font-['Roboto',sans-serif] text-black">
      <StatusBar />
      <AppBar />
      <main className="min-h-0 flex-1 overflow-y-auto [scrollbar-width:none]">
        <ul className="flex flex-col gap-[70px] p-[35px]">
          {routes.map((route) => (
            <RouteCard key={route.from} {...route} />
          ))}
        </ul>
      </main>
      <NavigationBar />
    </div>
  );
}
